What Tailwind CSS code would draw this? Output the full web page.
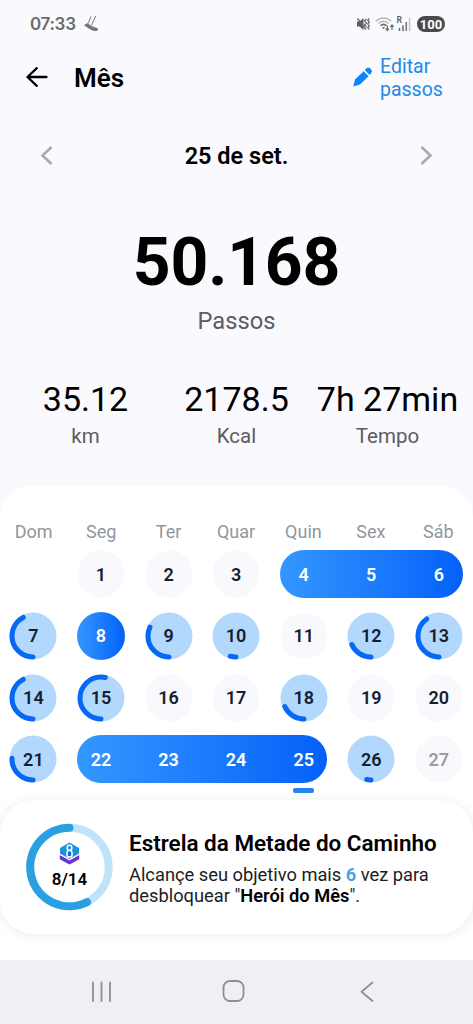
<!DOCTYPE html>
<html lang="pt-BR">
<head>
<meta charset="utf-8">
<meta name="viewport" content="width=device-width, initial-scale=1">
<title>Mês</title>
<script src="https://cdn.jsdelivr.net/npm/@tailwindcss/browser@4"></script>
</head>
<body class="w-[473px] h-[1024px] overflow-hidden bg-[#f9f9fe] font-['Roboto',sans-serif] text-black">
<div class="relative flex flex-col h-[1024px] overflow-hidden">

  <!-- status bar -->
  <div class="flex items-center h-[48px] pl-[30px] pr-[28px] text-[#6b6b70]">
    <span class="w-[47px] text-[17px] leading-none font-semibold whitespace-nowrap font-['Inter',sans-serif] tracking-[-0.3px]">07:33</span>
    <svg class="ml-[6px]" width="18" height="18" viewBox="0 0 18 18" fill="none"><path d="M1 10 4.800 8c1.700 2 4.200 3.700 9.200 5 1.400.5 1.300 2 .3 2.600-1.500.9-4 .5-5.800-.5C6 13.800 3.200 12 1 10Z" fill="#77777b"/><path d="M5.200 8.300 8 1.500M8.400 10.200 12.800 1" stroke="#8d8d91" stroke-width="1.100"/></svg>
    <div class="ml-auto flex items-center">
      <svg width="15" height="16" viewBox="0 0 15 16"><path d="M1 5.500h2.500L7.500 2v12l-4-3.500H1Z" fill="#5b5b60"/><path d="M1.500 2.500 10 13.500M10.500 3l-2 2 2 2-2 2 2 2M13.300 2.500l-1.500 1.800 1.500 1.800-1.500 1.900 1.500 1.900-1.500 1.800 1.500 1.700" stroke="#66666a" stroke-width="1.300" fill="none"/></svg>
      <svg class="ml-[4px]" width="20" height="16" viewBox="0 0 20 16" fill="none"><path d="M1 5.300C5 .8 12 .8 16 5.300M3.600 7.600c2.700-3 7.100-3 9.800 0" stroke="#b4b4b8" stroke-width="1.500"/><path d="M5.700 9.800c1.500-1.800 4-1.800 5.600 0" stroke="#66666a" stroke-width="1.700"/><path d="m8.500 13.200-1.700-2h3.400Z" fill="#66666a"/><path d="M12.300 9.500v5M10.700 12.700l1.600 1.900 1.600-1.900M17 14V9M15.400 10.800 17 8.900l1.600 1.900" stroke="#66666a" stroke-width="1.200"/></svg>
      <svg class="ml-[2px]" width="14" height="16" viewBox="0 0 14 16"><path d="M2.500 12v3M6 9.500V15" stroke="#66666a" stroke-width="1.500"/><path d="M9.300 6v9" stroke="#77777b" stroke-width="1.500"/><path d="M12.600 2v13" stroke="#c4c4c8" stroke-width="1.500"/><text x="-0.500" y="7" font-size="8.500" font-weight="700" fill="#66666a">R</text></svg>
      <span class="ml-[6px] flex h-[16px] w-[28px] items-center justify-center rounded-full bg-[#4a4a4d] text-[13px] leading-none font-bold text-white">100</span>
    </div>
  </div>

  <!-- app bar -->
  <header class="flex h-[62px] items-center pl-[26px] pr-[30px]">
    <svg class="-mt-[4px]" width="22" height="22" viewBox="0 0 22 22" fill="none" stroke="#000" stroke-width="2.300" stroke-linecap="round" stroke-linejoin="round"><path d="M20.500 11H2M10.800 2.200 1.500 11l9.300 8.800"/></svg>
    <h1 class="ml-[26px] -mt-[3px] text-[26px] leading-none font-semibold">Mês</h1>
    <div class="ml-auto flex items-center">
      <svg class="-mt-[4px]" width="19" height="20" viewBox="0 0 19 20" fill="#0a84ff"><path d="M.3 19.500 2 12.600 10.600 4.200l5 5L7 17.500ZM11.800 3l2-1.900a2.200 2.200 0 0 1 3 0l1.500 1.600a2.200 2.200 0 0 1 0 3L16.600 7.900Z"/></svg>
      <div class="ml-[8px] w-[63px] -mt-[2px] text-[19.500px] leading-[23.500px] text-[#2389e8]">Editar<br>passos</div>
    </div>
  </header>

  <!-- date picker -->
  <div class="flex h-[92px] items-center justify-between pl-[40px] pr-[40px]">
    <svg class="-mt-[2px]" width="13" height="19" viewBox="0 0 13 19" fill="none" stroke="#a9a9ae" stroke-width="2.600"><path d="M11.500 1 2.500 9.500l9 8.500"/></svg>
    <span class="mt-[2px] text-[23.500px] leading-none font-semibold">25 de set.</span>
    <svg class="-mt-[2px]" width="13" height="19" viewBox="0 0 13 19" fill="none" stroke="#a9a9ae" stroke-width="2.600"><path d="m1.500 1 9 8.500-9 8.500"/></svg>
  </div>

  <!-- totals -->
  <div class="flex h-[284px] flex-col items-center pt-[28px]">
    <div class="text-[66px] leading-[66px] font-bold tracking-[-0.200px]">50.168</div>
    <div class="mt-[11px] text-[23.700px] leading-[28px] text-[#5c5c62]">Passos</div>
    <div class="mt-[43px] grid w-[453px] grid-cols-3 text-center whitespace-nowrap">
      <div><div class="text-[34px] leading-[42px]">35.12</div><div class="mt-[4px] text-[20.500px] leading-[24px] text-[#5c5c62]">km</div></div>
      <div><div class="text-[34px] leading-[42px]">2178.5</div><div class="mt-[4px] text-[20.500px] leading-[24px] text-[#5c5c62]">Kcal</div></div>
      <div><div class="text-[34px] leading-[42px]">7h 27min</div><div class="mt-[4px] text-[20.500px] leading-[24px] text-[#5c5c62]">Tempo</div></div>
    </div>
  </div>

  <!-- calendar -->
  <section class="h-[474px] shrink-0 rounded-t-[32px] bg-white pt-[34px]">
    <div class="grid w-[472px] grid-cols-7 text-center text-[18px] leading-[24px] text-[#8f979f]">
      <span>Dom</span><span>Seg</span><span>Ter</span><span>Quar</span><span>Quin</span><span>Sex</span><span>Sáb</span>
    </div>
    <div id="days" class="mt-[6px] -ml-[0.400px] grid w-[473px] grid-cols-7 auto-rows-[61.800px] items-start text-[18px] font-semibold text-[#15202f]"></div>
  </section>

  <!-- achievement card -->
  <section class="absolute top-[793px] left-0 h-[167px] w-[473px] bg-white/70 pt-[7px]">
    <div class="flex h-[134px] items-center rounded-[34px] bg-white pl-[26px] shadow-[0_1px_8px_3px_rgba(0,0,0,0.05)]">
      <div class="relative flex h-[88px] w-[88px] shrink-0 flex-col items-center">
        <svg class="absolute inset-0" width="88" height="88" viewBox="0 0 88 88" fill="none" stroke-width="8">
          <circle cx="43.500" cy="44" r="39.300" stroke="#bfe3f8"/>
          <path d="M43.500 4.700A39.300 39.300 0 1 0 61 79.200" stroke="#2aa0e2" stroke-linecap="round"/>
        </svg>
        <svg class="mt-[19px] mr-[1px]" width="21" height="23" viewBox="0 0 21 23"><path d="M10.500.5 20 6v7l-9.500 5L1 13V6Z" fill="#1f90dc"/><path d="m.8 13 9.700 4.600L20.200 13v4.200l-9.700 5.300-9.700-5.300Z" fill="#6a2fd8"/><path d="M.8 11.500 7 15l3.500 2 3.500-2 6.200-3.500v1.600l-9.700 5.300L.8 13Z" fill="#fff"/><rect x="8.200" y="3.300" width="4.600" height="5.200" rx="2.200" fill="none" stroke="#fff" stroke-width="1.500"/><rect x="8" y="8.500" width="5" height="6.600" rx="2.200" fill="#2468c8" stroke="#fff" stroke-width="1.500"/></svg>
        <span class="mt-[5px] mr-[1px] text-[17px] leading-[18px] font-semibold">8/14</span>
      </div>
      <div class="mt-[2px] ml-[15px] whitespace-nowrap">
        <h2 class="text-[22.450px] leading-[26px] font-semibold">Estrela da Metade do Caminho</h2>
        <p class="mt-[8px] text-[18.300px] leading-[21.500px] text-[#1c1c1e]">Alcançe seu objetivo mais <b class="font-semibold text-[#3aa6e8]">6</b> vez para<br>desbloquear "<b class="font-semibold text-black">Herói do Mês</b>".</p>
      </div>
    </div>
  </section>
  <div class="absolute top-[788px] left-[293px] h-[5px] w-[21px] rounded-[2px] bg-[#2684ee]"></div>

  <!-- system navigation -->
  <nav class="absolute top-[960px] left-0 flex h-[64px] w-[473px] items-center justify-between bg-[#f0f0f4] pr-[99px] pl-[91px]">
    <svg class="-mt-[1px]" width="21" height="22" viewBox="0 0 21 22" stroke="#8e8e93" stroke-width="1.800" stroke-linecap="round"><path d="M2 1.500v18.500M10.500 1.500v18.500M19 1.500v18.500"/></svg>
    <svg class="-mt-[1px] mr-[5px]" width="23" height="23" viewBox="0 0 23 23" fill="none" stroke="#8e8e93" stroke-width="1.800"><rect x="1.500" y="1" width="20" height="20" rx="6.500"/></svg>
    <svg class="-mt-[1px]" width="14" height="22" viewBox="0 0 14 22" fill="none" stroke="#8e8e93" stroke-width="1.800" stroke-linecap="round" stroke-linejoin="round"><path d="M12.500 1.500 1.500 10.800l11 9.200"/></svg>
  </nav>
</div>
<script>
  // Progress arcs in degrees, measured clockwise from the bottom of each circle.
  const arcs = {7:152, 9:115, 10:16, 12:66, 13:144, 14:152, 15:192, 18:66, 21:92, 26:12};
  const cell = 'flex h-[48px] w-[48px] items-center justify-center justify-self-center rounded-full relative';
  const streak = 'grid h-[48px] mx-[10px] items-center rounded-full bg-linear-to-r from-[#3397ff] to-[#0560f8] text-white';
  let html = '<span></span>';
  for (let d = 1; d <= 27; d++) {
    if (d === 4) {
      html += `<div class="${streak} col-span-3"><div class="grid grid-cols-3 -mx-[10px] text-center"><span>4</span><span>5</span><span>6</span></div></div>`;
      d = 6;
    } else if (d === 22) {
      html += `<div class="${streak} col-span-4"><div class="grid grid-cols-4 -mx-[10px] text-center"><span>22</span><span>23</span><span>24</span><span>25</span></div></div>`;
      d = 25;
    } else if (d === 8) {
      html += `<div class="${cell} bg-linear-to-r from-[#3397ff] to-[#0560f8] text-white">8</div>`;
    } else if (arcs[d]) {
      html += `<div class="${cell}"><svg class="absolute inset-0" width="48" height="48" viewBox="0 0 48 48" fill="none"><circle cx="24" cy="24" r="23.500" fill="#b2d8fe"/><path d="M24 45a21 21 0 0 1 0-42 21 21 0 0 1 0 42" pathLength="360" stroke="#0768f5" stroke-width="5" stroke-linecap="round" stroke-dasharray="${arcs[d]} 400"/></svg><span class="relative">${d}</span></div>`;
    } else {
      html += `<div class="${cell}${d === 27 ? ' text-[#9c9ca2]' : ''}"><svg class="absolute inset-0" width="48" height="48" viewBox="0 0 48 48"><circle cx="24" cy="24" r="23.500" fill="#f9f8fd"/></svg><span class="relative">${d}</span></div>`;
    }
  }
  document.getElementById('days').innerHTML = html;
</script>
</body>
</html>
